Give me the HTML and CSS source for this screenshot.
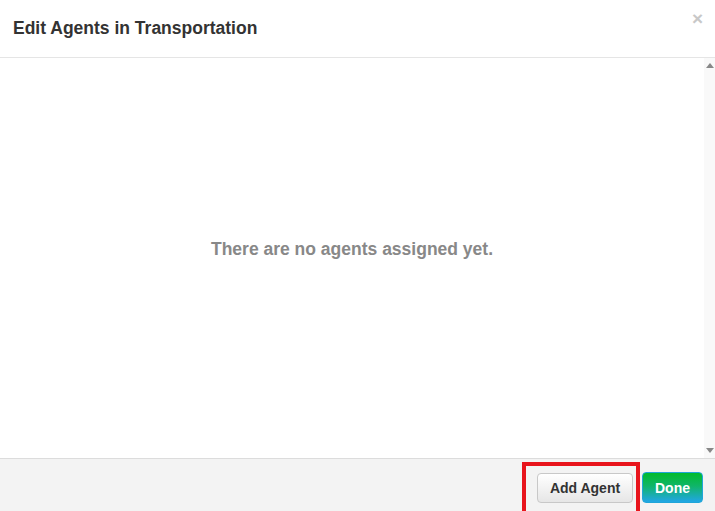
FILE: index.html
```html
<!DOCTYPE html>
<html>
<head>
<meta charset="utf-8">
<link rel="stylesheet" href="styles.css">
</head>
<body>
<div class="modal">
  <div class="modal-header">
    <h3 class="title">Edit Agents in Transportation</h3>
    <span class="close">&times;</span>
  </div>
  <div class="modal-body">
    <div class="content">
      <p class="empty">There are no agents assigned yet.</p>
    </div>
    <div class="scrollbar">
      <span class="arrow up"></span>
      <span class="arrow down"></span>
    </div>
  </div>
  <div class="modal-footer">
    <div class="highlight-wrap">
      <button class="btn btn-default">Add Agent</button>
      <span class="highlight"></span>
    </div>
    <button class="btn btn-done">Done</button>
  </div>
</div>
</body>
</html>
```

FILE: styles.css
```css
html, body {
  margin: 0;
  padding: 0;
  background: #fff;
  overflow: hidden;
}
body {
  font-family: "Liberation Sans", Arial, sans-serif;
  width: 715px;
  height: 511px;
}
.modal {
  display: flex;
  flex-direction: column;
  width: 715px;
  height: 511px;
}
.modal-header {
  height: 57px;
  border-bottom: 1px solid #e5e5e5;
  display: flex;
  align-items: flex-start;
  justify-content: space-between;
  padding: 0 13px;
  box-sizing: content-box;
  flex: none;
}
.title {
  margin: 0;
  padding-top: 18px;
  font-size: 17.5px;
  font-weight: bold;
  color: #333;
  line-height: 20px;
}
.close {
  padding-top: 9px;
  margin-right: -1px;
  font-size: 19px;
  font-weight: bold;
  color: #c8c8c8;
  line-height: 20px;
}
.modal-body {
  height: 400px;
  display: flex;
  flex: none;
}
.content {
  flex: 1;
  display: flex;
  align-items: center;
  justify-content: center;
}
.empty {
  margin: 0 0 18px 0;
  font-size: 17.5px;
  font-weight: bold;
  color: #888;
}
.scrollbar {
  width: 11px;
  background: #f9f9f9;
  display: flex;
  flex-direction: column;
  justify-content: space-between;
  align-items: center;
  padding: 5px 0 5px 0;
}
.arrow {
  width: 0;
  height: 0;
  border-left: 4px solid transparent;
  border-right: 4px solid transparent;
}
.arrow.up {
  border-bottom: 5px solid #888;
}
.arrow.down {
  border-top: 5px solid #888;
}
.modal-footer {
  flex: 1;
  border-top: 1px solid #dcdcdc;
  background: #f3f3f3;
  display: flex;
  justify-content: flex-end;
  align-items: flex-start;
  gap: 9px;
  padding: 13px 12px 0 0;
}
.highlight-wrap {
  position: relative;
  margin-top: 1px;
}
.highlight {
  position: absolute;
  left: -15px;
  top: -11px;
  width: 110px;
  height: 60px;
  border: 4px solid #e8141c;
  pointer-events: none;
}
.btn {
  font-family: "Liberation Sans", Arial, sans-serif;
  font-size: 14px;
  font-weight: bold;
  border-radius: 4px;
  height: 31px;
  padding: 0;
  white-space: nowrap;
  cursor: pointer;
}
.btn-default {
  width: 96px;
  height: 30px;
  color: #333;
  background: linear-gradient(#ffffff, #e6e6e6);
  border: 1px solid #c8c8c8;
}
.btn-done {
  width: 61px;
  color: #fff;
  border: 1px solid #1fa6d8;
  background: linear-gradient(#00bb2d 0%, #10b569 45%, #21a6e6 100%);
}
```
